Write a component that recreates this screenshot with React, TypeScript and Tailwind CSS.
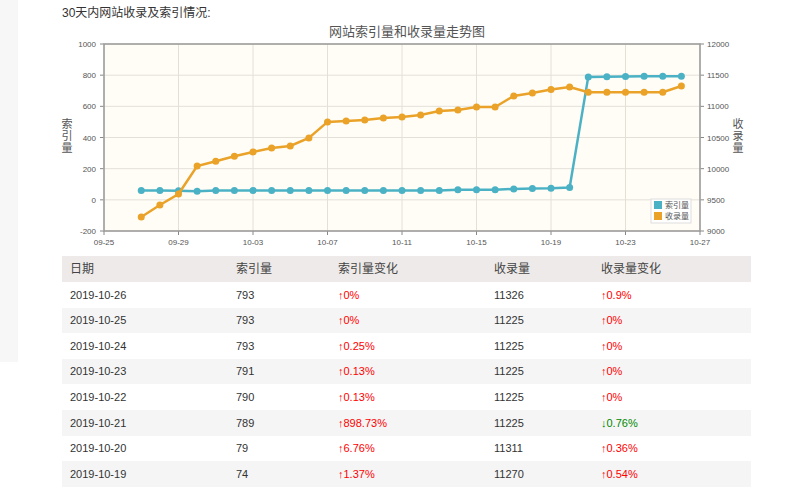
const X0 = 104, X1 = 700, Y0 = 44, Y1 = 231;
const dx = (X1 - X0) / 32;
const yl = (v: number) => Y1 - ((v + 200) / 1200) * (Y1 - Y0);
const yr = (v: number) => Y1 - ((v - 9000) / 3000) * (Y1 - Y0);

const idx = [60, 60, 60, 60, 58, 55, 60, 60, 60, 60, 60, 60, 60, 60, 60, 60, 60, 60, 60, 65, 65, 65, 70, 72, 74, 79, 789, 790, 791, 793, 793, 793];
const col = [9225, 9417, 9594, 10043, 10120, 10200, 10268, 10332, 10364, 10493, 10750, 10766, 10780, 10814, 10830, 10862, 10926, 10942, 10990, 10990, 11167, 11215, 11270, 11311, 11225, 11225, 11225, 11225, 11225, 11326];
const idxVals = idx.slice(idx.length - 30);

const rows = [
  ["2019-10-26", "793", "↑0%", "11326", "↑0.9%"],
  ["2019-10-25", "793", "↑0%", "11225", "↑0%"],
  ["2019-10-24", "793", "↑0.25%", "11225", "↑0%"],
  ["2019-10-23", "791", "↑0.13%", "11225", "↑0%"],
  ["2019-10-22", "790", "↑0.13%", "11225", "↑0%"],
  ["2019-10-21", "789", "↑898.73%", "11225", "↓0.76%"],
  ["2019-10-20", "79", "↑6.76%", "11311", "↑0.36%"],
  ["2019-10-19", "74", "↑1.37%", "11270", "↑0.54%"],
];

function Chart() {
  const xs = (i: number) => X0 + (i + 2) * dx;
  const ip = idxVals.map((v, i) => `${xs(i)},${yl(v)}`).join(" ");
  const cp = col.map((v, i) => `${xs(i)},${yr(v)}`).join(" ");
  const ticksL = [1000, 800, 600, 400, 200, 0, -200];
  const ticksR = [12000, 11500, 11000, 10500, 10000, 9500, 9000];
  const xl = ["09-25", "09-29", "10-03", "10-07", "10-11", "10-15", "10-19", "10-23", "10-27"];
  return (
    <svg width="799" height="250" className="block" style={{ fontFamily: "'Liberation Sans', 'Noto Sans CJK SC', sans-serif" }}>
      <text x="407" y="36" textAnchor="middle" fontSize="13" fill="#555">网站索引量和收录量走势图</text>
      <rect x={X0} y={Y0} width={X1 - X0} height={Y1 - Y0} fill="#fffdf6" />
      {ticksL.map((t) => (
        <g key={t}>
          <line x1={X0} x2={X1} y1={yl(t)} y2={yl(t)} stroke="#e3e0d8" />
          <text x={X0 - 8} y={yl(t) + 3} textAnchor="end" fontSize="8" fill="#555">{t}</text>
          <line x1={X0 - 4} x2={X0} y1={yl(t)} y2={yl(t)} stroke="#888" />
        </g>
      ))}
      {ticksR.map((t) => (
        <g key={t}>
          <text x={X1 + 7} y={yr(t) + 3} fontSize="8" fill="#555">{t}</text>
          <line x1={X1} x2={X1 + 4} y1={yr(t)} y2={yr(t)} stroke="#888" />
        </g>
      ))}
      {xl.map((t, i) => (
        <g key={t}>
          <line x1={X0 + i * 4 * dx} x2={X0 + i * 4 * dx} y1={Y0} y2={Y1} stroke="#e3e0d8" />
          <line x1={X0 + i * 4 * dx} x2={X0 + i * 4 * dx} y1={Y1} y2={Y1 + 4} stroke="#888" />
          <text x={X0 + i * 4 * dx} y={Y1 + 14} textAnchor="middle" fontSize="8" fill="#555">{t}</text>
        </g>
      ))}
      <rect x={X0} y={Y0} width={X1 - X0} height={Y1 - Y0} fill="none" stroke="#999" strokeWidth="1.5" />
      <text fontSize="11" fill="#555" textAnchor="middle">
        <tspan x="67" y="128">索</tspan><tspan x="67" y="140">引</tspan><tspan x="67" y="152">量</tspan>
      </text>
      <text fontSize="11" fill="#555" textAnchor="middle">
        <tspan x="738" y="128">收</tspan><tspan x="738" y="140">录</tspan><tspan x="738" y="152">量</tspan>
      </text>
      <polyline points={ip} fill="none" stroke="#4bb2c5" strokeWidth="2.5" />
      {idxVals.map((v, i) => <circle key={i} cx={xs(i)} cy={yl(v)} r="3.5" fill="#4bb2c5" />)}
      <polyline points={cp} fill="none" stroke="#eaa228" strokeWidth="2.5" />
      {col.map((v, i) => <circle key={i} cx={xs(i)} cy={yr(v)} r="3.5" fill="#eaa228" />)}
      <rect x="651" y="199" width="40" height="24" fill="#fff" stroke="#ddd" />
      <rect x="654" y="201" width="8" height="8" fill="#4bb2c5" />
      <text x="665" y="208" fontSize="8" fill="#555">索引量</text>
      <rect x="654" y="212" width="8" height="8" fill="#eaa228" />
      <text x="665" y="219" fontSize="8" fill="#555">收录量</text>
    </svg>
  );
}

export default function App() {
  return (
    <div className="relative h-[490px] w-[799px] overflow-hidden bg-white text-[#333]" style={{ fontFamily: "'Liberation Sans', 'Noto Sans CJK SC', sans-serif" }}>
      <div className="absolute left-0 top-0 h-[362px] w-[18px] bg-[#f7f7f7]" />
      <div className="pl-[62px] pt-[5px] text-[12px] leading-[16px]">30天内网站收录及索引情况:</div>
      <div className="-mt-[21px]">
        <Chart />
      </div>
      <div className="ml-[62px] mt-[6px] w-[689px] text-[11px]">
        <div className="grid h-[26px] grid-cols-[166px_102px_156px_107px_1fr] items-center bg-[#eeeae9] pl-[8px] text-[12px] text-[#444]">
          <span>日期</span><span>索引量</span><span>索引量变化</span><span>收录量</span><span>收录量变化</span>
        </div>
        {rows.map((r, i) => (
          <div key={r[0]} className={`grid h-[25.6px] grid-cols-[166px_102px_156px_107px_1fr] items-center pl-[8px] ${i % 2 ? "bg-[#f5f5f5]" : "bg-white"}`}>
            <span>{r[0]}</span>
            <span>{r[1]}</span>
            <span className="text-[#f00]">{r[2]}</span>
            <span>{r[3]}</span>
            <span className={r[4].startsWith("↓") ? "text-[#080]" : "text-[#f00]"}>{r[4]}</span>
          </div>
        ))}
      </div>
    </div>
  );
}
